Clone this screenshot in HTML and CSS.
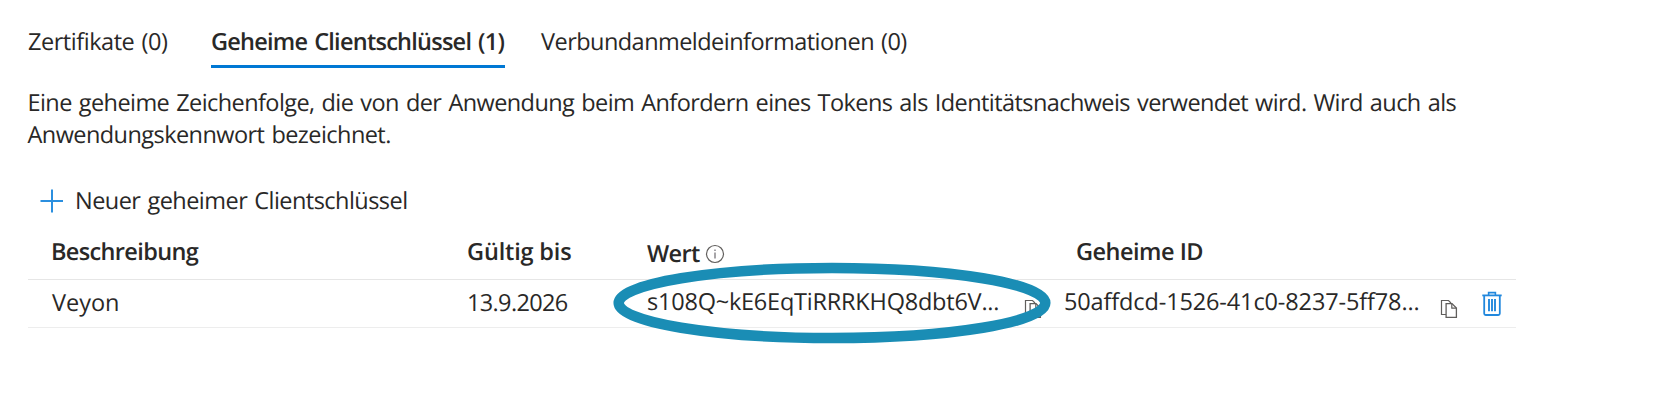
FILE: index.html
```html
<!DOCTYPE html>
<html lang="de">
<head>
<meta charset="utf-8">
<title>Geheime Clientschlüssel</title>
<link rel="stylesheet" href="styles.css">
</head>
<body>
<svg width="0" height="0" class="defs">
  <symbol id="copy" viewBox="0 0 18 20">
    <path d="M6 15.5H1.5V1.5H8.5L11 4" fill="none" stroke="#605e5c" stroke-width="1.2"/>
    <path d="M6.1 4.6H12L16.4 9V18.4H6.1Z" fill="#fff" stroke="#605e5c" stroke-width="1.3"/>
    <path d="M11.8 4.8V9.2H16.2" fill="none" stroke="#605e5c" stroke-width="1.2"/>
  </symbol>
</svg>
<nav class="tabs">
  <a class="tab t-cert">Zertifikate (0)</a>
  <a class="tab t-secret active">Geheime Clientschlüssel (1)</a>
  <a class="tab t-fed">Verbundanmeldeinformationen (0)</a>
</nav>
<p class="intro">Eine geheime Zeichenfolge, die von der Anwendung beim Anfordern eines Tokens als Identitätsnachweis verwendet wird. Wird auch als<br><span class="intro-end">Anwendungskennwort bezeichnet.</span></p>
<div class="command">
  <svg class="plus" width="24" height="24" viewBox="0 0 24 24"><path d="M0.5 12H23M12 0.5V23.5" stroke="#2b8fdf" stroke-width="2" fill="none"/></svg>
  <span class="command-label">Neuer geheimer Clientschlüssel</span>
</div>
<section class="table">
  <div class="row head">
    <div class="h-desc">Beschreibung</div>
    <div class="h-exp">Gültig bis</div>
    <div class="h-val"><span>Wert</span>
      <svg class="info" width="20" height="20" viewBox="0 0 20 20"><circle cx="10" cy="10" r="8.5" fill="none" stroke="#605e5c" stroke-width="1.2"/><path d="M10 8.4V14.4M10 5.6V7" stroke="#77757a" stroke-width="1.3"/></svg>
    </div>
    <div class="h-id">Geheime ID</div>
  </div>
  <div class="row entry">
    <div class="c-desc">Veyon</div>
    <div class="c-exp">13.9.2026</div>
    <div class="c-val"><span>s108Q~kE6EqTiRRRKHQ8dbt6V...</span>
      <svg class="copy" width="18" height="20"><use href="#copy"/></svg>
      <svg class="marker" width="440" height="84" viewBox="0 0 440 84"><ellipse cx="220" cy="42" rx="213.3" ry="35" fill="none" stroke="#1a8db5" stroke-width="10.5"/></svg>
    </div>
    <div class="c-id"><span>50affdcd-1526-41c0-8237-5ff78...</span>
      <svg class="copy" width="18" height="20"><use href="#copy"/></svg>
      <svg class="trash" width="20" height="26" viewBox="0 0 20 26"><g fill="none" stroke="#2288dd"><path d="M0.3 4.4H19.7" stroke-width="1.8"/><path d="M6.6 4V1.6H13.4V4" stroke-width="1.6"/><path d="M2.2 5V22.6Q2.2 24 3.7 24H16.3Q17.8 24 17.8 22.6V5" stroke-width="1.8"/><path d="M7 8V20.3M10 8V20.3M13 8V20.3" stroke-width="1.9"/></g></svg>
    </div>
  </div>
</section>
</body>
</html>
```
FILE: styles.css
```css
body {
  box-sizing: border-box;
  margin: 0;
  min-height: 409px;
  padding: 25px 0 0 28px;
  background: #fff;
  color: #292827;
  font: 23.5px/32px "Open Sans", "Noto Sans", sans-serif;
  text-rendering: geometricPrecision;
  white-space: nowrap;
}
.defs { display: none; }
.tabs { display: flex; height: 43px; }
.tab { box-sizing: border-box; height: 43px; }
.active { border-bottom: 3px solid #0078d4; font-weight: 600; }
.t-cert { width: 183px; letter-spacing: -0.46px; word-spacing: 1.5px; }
.t-secret { width: 294px; margin-right: 36px; letter-spacing: -0.75px; word-spacing: 1.5px; }
.t-fed { letter-spacing: -0.54px; word-spacing: 1.5px; }
.intro { margin: 18px 0 0 -0.5px; letter-spacing: -0.58px; word-spacing: 1.5px; }
.intro-end { letter-spacing: -0.56px; }
.command { display: flex; align-items: center; margin-top: 34px; padding-left: 12px; height: 32px; }
.plus { margin: 1px 11px 0 0; }
.command-label { letter-spacing: -0.54px; word-spacing: 1.5px; }
.table { width: 1488px; }
.row {
  display: grid;
  grid-template-columns: 416px 180px 417px 1fr;
  box-sizing: border-box;
  padding-left: 23px;
}
.head { height: 64px; padding-top: 19px; border-bottom: 1px solid #e6e6e6; font-weight: 600; }
.entry { height: 48px; padding-top: 6px; border-bottom: 1px solid #ededed; }
.h-desc { letter-spacing: -0.64px; }
.h-exp { letter-spacing: -0.17px; }
.h-val { display: flex; padding-top: 2px; letter-spacing: -0.6px; }
.info { margin: 7px 0 0 5.5px; }
.h-id { padding-left: 12px; letter-spacing: -0.5px; }
.c-desc { padding-left: 1px; }
.c-exp { letter-spacing: -0.65px; }
.c-val, .c-id { display: flex; position: relative; margin-top: -1px; }
.c-val span { width: 377px; letter-spacing: -0.22px; }
.c-id span { width: 376px; letter-spacing: -0.13px; }
.copy { flex: none; margin-top: 14px; }
.trash { flex: none; margin: 6px 0 0 24px; }
.marker { position: absolute; left: -35px; top: -24px; }
```
